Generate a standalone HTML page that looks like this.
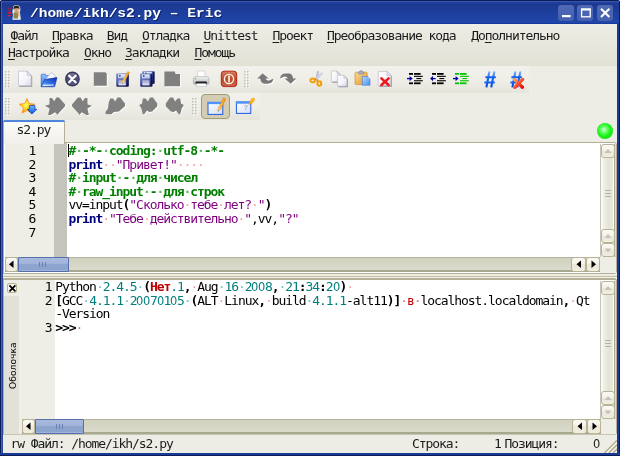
<!DOCTYPE html>
<html lang="ru">
<head>
<meta charset="utf-8">
<title>/home/ikh/s2.py – Eric</title>
<style>
html,body{margin:0;padding:0;background:#fff;overflow:hidden}
body{width:620px;height:456px;position:relative;font-family:"DejaVu Sans Mono","Liberation Mono",monospace;font-size:13px;letter-spacing:-1.066px;color:#000}
#win,#win div,#win svg{position:absolute;box-sizing:border-box}
#win span,#win u{position:static}
#win{will-change:transform;left:0;top:0;width:620px;height:456px;overflow:hidden;border-radius:2.5px 2.5px 0 0;
 background:linear-gradient(to right,#0c1c55 0,#0c1c55 1px,#4262b8 1px,#4262b8 2px,#2848a6 2px,#2848a6 3px,#1a3a98 3px,#1a3a98 619px,#0c1c55 619px)}
#botb{left:0;top:453px;width:620px;height:3px;background:linear-gradient(to bottom,#1a3a98 0,#1a3a98 2px,#0c1c55 2px)}
#title{left:0;top:0;width:620px;height:24px;
 background:linear-gradient(to bottom,#0c1c55 0px,#0c1c55 1px,#3555b3 1px,#3555b3 2px,#2444a2 2px,#1c3990 4px,#1d3e9c 12px,#2046aa 22.5px,#17389c 23px,#17389c 24px)}
#ttext{left:29.5px;top:4.3px;height:20px;line-height:20px;font-family:"Liberation Mono","DejaVu Sans Mono",monospace;font-weight:bold;font-size:12.4px;letter-spacing:0;color:#fff;white-space:pre;text-shadow:0.8px 1px 0 #0e2266;transform-origin:0 0;transform:scaleX(1.175)}
.wb{top:4.7px;width:16.4px;height:16.3px;border-radius:3px;background:linear-gradient(to bottom,#5069b5,#4760ae)}
#client{left:3px;top:24px;width:614px;height:429px;background:#eeede5}
#menubar{left:3px;top:24px;width:614px;height:42px;background:linear-gradient(to bottom,#eeede6,#e2e1d5)}
.t{white-space:pre;height:16px;line-height:16px;color:#1c1c1c}
.t u{text-decoration:underline;text-decoration-thickness:1px;text-underline-offset:2.2px;text-decoration-skip-ink:none}
.tb{background:linear-gradient(to bottom,#f2f1ec,#eeede6 55%,#e6e5dc)}
.ln{white-space:pre;height:14px;line-height:14px}
.cm{color:#007f00;font-weight:bold}
.kw{color:#00007f;font-weight:bold}
.st{color:#7f007f}
.ws{color:#f0a0a0}
.num{color:#007f7f}
.red{color:#c00000}
.z{font-family:"DejaVu Sans","Liberation Sans",sans-serif;letter-spacing:0;display:inline-block;width:6.76px;transform:scaleX(0.88);transform-origin:0 50%}
.wsr{color:#e87070}
.wsg{color:#60b860}
.wst{color:#70c0c0}
.frame{border:1px solid #b5b095;border-radius:2px}
.sbtn{border:1px solid #b9b294;border-radius:3px;background:linear-gradient(to bottom,#fbfaf6,#f3f0e6 50%,#ebe7d9 50%,#f0ede2)}
.vtrack{background:linear-gradient(to right,#c6c6b6 0,#c6c6b6 1.4px,#fbfbf7 1.4px,#fbfbf7 2.2px,#f1f1e9 3px,#e3e3d6 9px,#e9e9dd 13px,#fff 13px,#fff 14px,#a9a992 14px,#a9a992 15px,#dcdccf 15px,#dcdccf 16px)}
.htrack{background:linear-gradient(to bottom,#b6b6a0 0,#b6b6a0 1px,#d1d1bf 1px,#dbdbcb 13px,#a9a992 13px,#a9a992 14.5px)}
.hslider{border:1px solid #5670ab;border-radius:1px;background:linear-gradient(to bottom,#a9badd,#a0b2d9 50%,#8fa5cf 50%,#8ca3ce 88%,#a9badf 100%)}
</style>
</head>
<body>
<div id="win">
 <div id="title"></div>
 <div style="left:0;top:1px;width:1px;height:23px;background:#0c1c55"></div>
 <div style="left:1px;top:1px;width:1px;height:23px;background:#4262b8"></div>
 <div style="left:619px;top:1px;width:1px;height:23px;background:#0c1c55"></div>
 <div id="ttext">/home/ikh/s2.py – Eric</div>
 <div class="wb" style="left:557.7px"></div>
 <div class="wb" style="left:577px"></div>
 <div class="wb" style="left:596.6px"></div>
 <div id="botb"></div>
 <div id="client"></div>
 <div id="menubar"></div>
 <div class="t" style="left:10.5px;top:27.7px"><u>Ф</u>айл</div>
 <div class="t" style="left:52px;top:27.7px"><u>П</u>равка</div>
 <div class="t" style="left:106.7px;top:27.7px"><u>В</u>ид</div>
 <div class="t" style="left:142px;top:27.7px"><u>О</u>тладка</div>
 <div class="t" style="left:203.5px;top:27.7px"><u>U</u>nittest</div>
 <div class="t" style="left:272.5px;top:27.7px"><u>П</u>роект</div>
 <div class="t" style="left:327px;top:27.7px"><u>П</u>реобразование кода</div>
 <div class="t" style="left:471.3px;top:27.7px">До<u>п</u>олнительно</div>
 <div class="t" style="left:8px;top:44.9px"><u>Н</u>астройка</div>
 <div class="t" style="left:84px;top:44.9px"><u>О</u>кно</div>
 <div class="t" style="left:125px;top:44.9px"><u>З</u>акладки</div>
 <div class="t" style="left:194.5px;top:44.9px"><u>П</u>омощь</div>
 <div class="tb" style="left:3px;top:66px;width:526px;height:27px"></div>
 <div class="tb" style="left:3px;top:93px;width:257px;height:27px"></div>
 <svg style="left:0;top:0" width="0" height="0"><defs>
<linearGradient id="gPage" x1="0" y1="0" x2="1" y2="1"><stop offset="0" stop-color="#ffffff"/><stop offset="0.55" stop-color="#f5f5fa"/><stop offset="1" stop-color="#d8d8e6"/></linearGradient>
<linearGradient id="gFold" x1="0" y1="1" x2="0.9" y2="0"><stop offset="0" stop-color="#a8d4ff"/><stop offset="0.4" stop-color="#3c7cea"/><stop offset="1" stop-color="#0a30b0"/></linearGradient>
<linearGradient id="gFold2" x1="0" y1="0" x2="0" y2="1"><stop offset="0" stop-color="#8ec4ff"/><stop offset="1" stop-color="#3a7ae0"/></linearGradient>
<linearGradient id="gClose" x1="0" y1="0" x2="0" y2="1"><stop offset="0" stop-color="#77779c"/><stop offset="0.5" stop-color="#4a4a72"/><stop offset="1" stop-color="#5a5a82"/></linearGradient>
<linearGradient id="gFlop" x1="0" y1="0" x2="1" y2="1"><stop offset="0" stop-color="#8494cc"/><stop offset="0.45" stop-color="#4454a0"/><stop offset="1" stop-color="#141a5a"/></linearGradient>
<linearGradient id="gFlopL" x1="0" y1="0" x2="0" y2="1"><stop offset="0" stop-color="#e4ecfc"/><stop offset="1" stop-color="#aabce8"/></linearGradient>
<linearGradient id="gShut" x1="0" y1="0" x2="0" y2="1"><stop offset="0" stop-color="#9098c8"/><stop offset="1" stop-color="#e6e6f6"/></linearGradient>
<linearGradient id="gPen" x1="0" y1="0" x2="1" y2="0"><stop offset="0" stop-color="#ffd860"/><stop offset="1" stop-color="#f09010"/></linearGradient>
<linearGradient id="gPrn" x1="0" y1="0" x2="0" y2="1"><stop offset="0" stop-color="#f4f4f4"/><stop offset="1" stop-color="#b4b4b8"/></linearGradient>
<linearGradient id="gPow" x1="0" y1="0" x2="0" y2="1"><stop offset="0" stop-color="#d88060"/><stop offset="0.5" stop-color="#b84a28"/><stop offset="1" stop-color="#c86848"/></linearGradient>
<linearGradient id="gClip" x1="0" y1="0" x2="1" y2="1"><stop offset="0" stop-color="#f8d898"/><stop offset="1" stop-color="#e09a28"/></linearGradient>
<linearGradient id="gBlueP" x1="0" y1="0" x2="1" y2="1"><stop offset="0" stop-color="#b8d8ff"/><stop offset="1" stop-color="#4a90f0"/></linearGradient>
<linearGradient id="gHash" x1="0" y1="0" x2="0" y2="1"><stop offset="0" stop-color="#8ab8ff"/><stop offset="0.35" stop-color="#1868f4"/><stop offset="1" stop-color="#0a48d8"/></linearGradient>
<linearGradient id="gRedX" x1="0" y1="0" x2="1" y2="1"><stop offset="0" stop-color="#ffa060"/><stop offset="0.5" stop-color="#f85030"/><stop offset="1" stop-color="#e80808"/></linearGradient>
<radialGradient id="gStar" cx="0.45" cy="0.45" r="0.6"><stop offset="0" stop-color="#ffff60"/><stop offset="0.45" stop-color="#ffd020"/><stop offset="1" stop-color="#ff8000"/></radialGradient>
<linearGradient id="gArr" x1="0" y1="0" x2="0" y2="1"><stop offset="0" stop-color="#70b8ff"/><stop offset="1" stop-color="#0858e0"/></linearGradient>
<linearGradient id="gWin" x1="0" y1="0" x2="1" y2="1"><stop offset="0" stop-color="#ffffff"/><stop offset="1" stop-color="#d4dcf4"/></linearGradient>
</defs></svg>
 <svg style="left:5.3px;top:71px" width="7" height="19" viewBox="0 0 7 19"><rect x="1.00" y="1.00" width="1.5" height="1.5" fill="#fdfdfb"/><rect x="0.00" y="0.00" width="1.6" height="1.6" fill="#c3c2b2"/><rect x="4.00" y="1.00" width="1.5" height="1.5" fill="#fdfdfb"/><rect x="3.00" y="0.00" width="1.6" height="1.6" fill="#c3c2b2"/><rect x="1.00" y="3.95" width="1.5" height="1.5" fill="#fdfdfb"/><rect x="0.00" y="2.95" width="1.6" height="1.6" fill="#c3c2b2"/><rect x="4.00" y="3.95" width="1.5" height="1.5" fill="#fdfdfb"/><rect x="3.00" y="2.95" width="1.6" height="1.6" fill="#c3c2b2"/><rect x="1.00" y="6.90" width="1.5" height="1.5" fill="#fdfdfb"/><rect x="0.00" y="5.90" width="1.6" height="1.6" fill="#c3c2b2"/><rect x="4.00" y="6.90" width="1.5" height="1.5" fill="#fdfdfb"/><rect x="3.00" y="5.90" width="1.6" height="1.6" fill="#c3c2b2"/><rect x="1.00" y="9.85" width="1.5" height="1.5" fill="#fdfdfb"/><rect x="0.00" y="8.85" width="1.6" height="1.6" fill="#c3c2b2"/><rect x="4.00" y="9.85" width="1.5" height="1.5" fill="#fdfdfb"/><rect x="3.00" y="8.85" width="1.6" height="1.6" fill="#c3c2b2"/><rect x="1.00" y="12.80" width="1.5" height="1.5" fill="#fdfdfb"/><rect x="0.00" y="11.80" width="1.6" height="1.6" fill="#c3c2b2"/><rect x="4.00" y="12.80" width="1.5" height="1.5" fill="#fdfdfb"/><rect x="3.00" y="11.80" width="1.6" height="1.6" fill="#c3c2b2"/><rect x="1.00" y="15.75" width="1.5" height="1.5" fill="#fdfdfb"/><rect x="0.00" y="14.75" width="1.6" height="1.6" fill="#c3c2b2"/><rect x="4.00" y="15.75" width="1.5" height="1.5" fill="#fdfdfb"/><rect x="3.00" y="14.75" width="1.6" height="1.6" fill="#c3c2b2"/></svg>
 <svg style="left:244.3px;top:71px" width="7" height="19" viewBox="0 0 7 19"><rect x="1.00" y="1.00" width="1.5" height="1.5" fill="#fdfdfb"/><rect x="0.00" y="0.00" width="1.6" height="1.6" fill="#c3c2b2"/><rect x="4.00" y="1.00" width="1.5" height="1.5" fill="#fdfdfb"/><rect x="3.00" y="0.00" width="1.6" height="1.6" fill="#c3c2b2"/><rect x="1.00" y="3.95" width="1.5" height="1.5" fill="#fdfdfb"/><rect x="0.00" y="2.95" width="1.6" height="1.6" fill="#c3c2b2"/><rect x="4.00" y="3.95" width="1.5" height="1.5" fill="#fdfdfb"/><rect x="3.00" y="2.95" width="1.6" height="1.6" fill="#c3c2b2"/><rect x="1.00" y="6.90" width="1.5" height="1.5" fill="#fdfdfb"/><rect x="0.00" y="5.90" width="1.6" height="1.6" fill="#c3c2b2"/><rect x="4.00" y="6.90" width="1.5" height="1.5" fill="#fdfdfb"/><rect x="3.00" y="5.90" width="1.6" height="1.6" fill="#c3c2b2"/><rect x="1.00" y="9.85" width="1.5" height="1.5" fill="#fdfdfb"/><rect x="0.00" y="8.85" width="1.6" height="1.6" fill="#c3c2b2"/><rect x="4.00" y="9.85" width="1.5" height="1.5" fill="#fdfdfb"/><rect x="3.00" y="8.85" width="1.6" height="1.6" fill="#c3c2b2"/><rect x="1.00" y="12.80" width="1.5" height="1.5" fill="#fdfdfb"/><rect x="0.00" y="11.80" width="1.6" height="1.6" fill="#c3c2b2"/><rect x="4.00" y="12.80" width="1.5" height="1.5" fill="#fdfdfb"/><rect x="3.00" y="11.80" width="1.6" height="1.6" fill="#c3c2b2"/><rect x="1.00" y="15.75" width="1.5" height="1.5" fill="#fdfdfb"/><rect x="0.00" y="14.75" width="1.6" height="1.6" fill="#c3c2b2"/><rect x="4.00" y="15.75" width="1.5" height="1.5" fill="#fdfdfb"/><rect x="3.00" y="14.75" width="1.6" height="1.6" fill="#c3c2b2"/></svg>
 <svg style="left:5.3px;top:98px" width="7" height="19" viewBox="0 0 7 19"><rect x="1.00" y="1.00" width="1.5" height="1.5" fill="#fdfdfb"/><rect x="0.00" y="0.00" width="1.6" height="1.6" fill="#c3c2b2"/><rect x="4.00" y="1.00" width="1.5" height="1.5" fill="#fdfdfb"/><rect x="3.00" y="0.00" width="1.6" height="1.6" fill="#c3c2b2"/><rect x="1.00" y="3.95" width="1.5" height="1.5" fill="#fdfdfb"/><rect x="0.00" y="2.95" width="1.6" height="1.6" fill="#c3c2b2"/><rect x="4.00" y="3.95" width="1.5" height="1.5" fill="#fdfdfb"/><rect x="3.00" y="2.95" width="1.6" height="1.6" fill="#c3c2b2"/><rect x="1.00" y="6.90" width="1.5" height="1.5" fill="#fdfdfb"/><rect x="0.00" y="5.90" width="1.6" height="1.6" fill="#c3c2b2"/><rect x="4.00" y="6.90" width="1.5" height="1.5" fill="#fdfdfb"/><rect x="3.00" y="5.90" width="1.6" height="1.6" fill="#c3c2b2"/><rect x="1.00" y="9.85" width="1.5" height="1.5" fill="#fdfdfb"/><rect x="0.00" y="8.85" width="1.6" height="1.6" fill="#c3c2b2"/><rect x="4.00" y="9.85" width="1.5" height="1.5" fill="#fdfdfb"/><rect x="3.00" y="8.85" width="1.6" height="1.6" fill="#c3c2b2"/><rect x="1.00" y="12.80" width="1.5" height="1.5" fill="#fdfdfb"/><rect x="0.00" y="11.80" width="1.6" height="1.6" fill="#c3c2b2"/><rect x="4.00" y="12.80" width="1.5" height="1.5" fill="#fdfdfb"/><rect x="3.00" y="11.80" width="1.6" height="1.6" fill="#c3c2b2"/><rect x="1.00" y="15.75" width="1.5" height="1.5" fill="#fdfdfb"/><rect x="0.00" y="14.75" width="1.6" height="1.6" fill="#c3c2b2"/><rect x="4.00" y="15.75" width="1.5" height="1.5" fill="#fdfdfb"/><rect x="3.00" y="14.75" width="1.6" height="1.6" fill="#c3c2b2"/></svg>
 <svg style="left:192.3px;top:98px" width="7" height="19" viewBox="0 0 7 19"><rect x="1.00" y="1.00" width="1.5" height="1.5" fill="#fdfdfb"/><rect x="0.00" y="0.00" width="1.6" height="1.6" fill="#c3c2b2"/><rect x="4.00" y="1.00" width="1.5" height="1.5" fill="#fdfdfb"/><rect x="3.00" y="0.00" width="1.6" height="1.6" fill="#c3c2b2"/><rect x="1.00" y="3.95" width="1.5" height="1.5" fill="#fdfdfb"/><rect x="0.00" y="2.95" width="1.6" height="1.6" fill="#c3c2b2"/><rect x="4.00" y="3.95" width="1.5" height="1.5" fill="#fdfdfb"/><rect x="3.00" y="2.95" width="1.6" height="1.6" fill="#c3c2b2"/><rect x="1.00" y="6.90" width="1.5" height="1.5" fill="#fdfdfb"/><rect x="0.00" y="5.90" width="1.6" height="1.6" fill="#c3c2b2"/><rect x="4.00" y="6.90" width="1.5" height="1.5" fill="#fdfdfb"/><rect x="3.00" y="5.90" width="1.6" height="1.6" fill="#c3c2b2"/><rect x="1.00" y="9.85" width="1.5" height="1.5" fill="#fdfdfb"/><rect x="0.00" y="8.85" width="1.6" height="1.6" fill="#c3c2b2"/><rect x="4.00" y="9.85" width="1.5" height="1.5" fill="#fdfdfb"/><rect x="3.00" y="8.85" width="1.6" height="1.6" fill="#c3c2b2"/><rect x="1.00" y="12.80" width="1.5" height="1.5" fill="#fdfdfb"/><rect x="0.00" y="11.80" width="1.6" height="1.6" fill="#c3c2b2"/><rect x="4.00" y="12.80" width="1.5" height="1.5" fill="#fdfdfb"/><rect x="3.00" y="11.80" width="1.6" height="1.6" fill="#c3c2b2"/><rect x="1.00" y="15.75" width="1.5" height="1.5" fill="#fdfdfb"/><rect x="0.00" y="14.75" width="1.6" height="1.6" fill="#c3c2b2"/><rect x="4.00" y="15.75" width="1.5" height="1.5" fill="#fdfdfb"/><rect x="3.00" y="14.75" width="1.6" height="1.6" fill="#c3c2b2"/></svg>
 <svg style="left:17px;top:70px" width="18" height="18" viewBox="0 0 18 18"><path d="M2.4 2.2 h8.600000000000001 l4.2 4.2 v10.399999999999999 h-12.8 z" fill="#707084" opacity="0.75"/><path d="M1.5 1.2 h8.600000000000001 l4.2 4.2 v10.399999999999999 h-12.8 z" fill="url(#gPage)" stroke="#b4b4c8" stroke-width="0.6"/><path d="M10.100000000000001 1.2 v4.2 h4.2 z" fill="#e8e8f2" stroke="#a8a8bc" stroke-width="0.5"/></svg>
 <svg style="left:40px;top:70px" width="19" height="18" viewBox="0 0 19 18"><path d="M1.2 16.6 V5 Q1.2 4.2 2 4.2 H5.2 L6.4 5.6 H12 V16.6 z" fill="url(#gFold2)" stroke="#2456c8" stroke-width="0.6"/><path d="M5.2 9.5 L11.4 2.6 L15.6 6.2 L9.6 13 z" fill="#fbfbff" stroke="#9aa4d0" stroke-width="0.6"/><path d="M1.2 16.7 L4.6 9.4 L17 7.6 L14.6 16.7 z" fill="url(#gFold)" stroke="#0c2ea8" stroke-width="0.6"/><path d="M3 15.4 L13.6 15 " stroke="#e8f0ff" stroke-width="1.1"/></svg>
 <svg style="left:63px;top:70px" width="19" height="18" viewBox="0 0 19 18"><circle cx="9.4" cy="9" r="7.4" fill="#36365e"/><circle cx="9.4" cy="9" r="6.1" fill="url(#gClose)"/><path d="M6.2 5.8 L12.6 12.2 M12.6 5.8 L6.2 12.2" stroke="#ffffff" stroke-width="2.3" stroke-linecap="round"/></svg>
 <svg style="left:92px;top:70px" width="18" height="18" viewBox="0 0 18 18"><path d="M2.8 3.2 H14.3 L15.8 4.7 V16.7 H2.8 z" fill="#ffffff"/><path d="M1.8 2.2 H13.3 L14.8 3.7 V15.7 H1.8 z" fill="#808080"/></svg>
 <svg style="left:115px;top:70px" width="18" height="18" viewBox="0 0 18 18"><rect x="1.2" y="3.4" width="12.4" height="13" rx="0.8" fill="url(#gFlop)"/><path d="M13.0 4.0 V15.799999999999999 H1.7999999999999998" fill="none" stroke="#10144c" stroke-width="1.3"/><rect x="3.0" y="4.1" width="8.0" height="4.42" fill="url(#gFlopL)"/><rect x="4.2" y="4.8" width="1.3" height="1.7" fill="#283070"/><rect x="3.4000000000000004" y="9.51" width="7.4" height="5.89" fill="url(#gShut)"/><path d="M12.8 1.4 L14.6 2.5 L8.9 12.6 L7 13.7 L7.2 11.5 z" fill="url(#gPen)" stroke="#d88810" stroke-width="0.35"/><path d="M7.2 11.5 L8.9 12.6 L7 13.7 z" fill="#f4dcb0"/><path d="M7.05 13.65 L7.6 12.5 L8.1 13.1 z" fill="#403020"/></svg>
 <svg style="left:139px;top:70px" width="18" height="18" viewBox="0 0 18 18"><rect x="3.2" y="1.2" width="12.2" height="12.4" rx="0.8" fill="url(#gFlop)"/><path d="M14.799999999999999 1.7999999999999998 V13.0 H3.8000000000000003" fill="none" stroke="#10144c" stroke-width="1.3"/><rect x="5.0" y="1.9" width="7.799999999999999" height="4.22" fill="url(#gFlopL)"/><rect x="6.2" y="2.5999999999999996" width="1.3" height="1.7" fill="#283070"/><rect x="5.4" y="7.03" width="7.199999999999999" height="5.57" fill="url(#gShut)"/><rect x="1.1" y="3.6" width="12.2" height="12.8" rx="0.8" fill="url(#gFlop)"/><path d="M12.7 4.2 V15.800000000000002 H1.7000000000000002" fill="none" stroke="#10144c" stroke-width="1.3"/><rect x="2.9000000000000004" y="4.3" width="7.799999999999999" height="4.35" fill="url(#gFlopL)"/><rect x="4.1" y="5.0" width="1.3" height="1.7" fill="#283070"/><rect x="3.3000000000000003" y="9.62" width="7.199999999999999" height="5.78" fill="url(#gShut)"/></svg>
 <svg style="left:163px;top:70px" width="19" height="18" viewBox="0 0 19 18"><path d="M2.4 2.4 H12.8 V5 H17.8 V17.2 H2.4 z" fill="#ffffff"/><path d="M1.4 1.4 H11.8 L12.6 4 H17 V16.3 H1.4 z" fill="#808080"/></svg>
 <svg style="left:192px;top:70px" width="19" height="18" viewBox="0 0 19 18"><path d="M5.6 1 H13 V8 H5.6 z" fill="#ffffff" stroke="#c4c4cc" stroke-width="0.6"/><path d="M3.2 6.6 H15 Q17 7 17 9.4 V13 Q17 14.2 15.6 14.2 H2.8 Q1.3 14.2 1.3 13 V9.4 Q1.3 7 3.2 6.6 z" fill="url(#gPrn)" stroke="#9c9ca4" stroke-width="0.5"/><rect x="3.6" y="11.6" width="11.2" height="2.4" rx="0.6" fill="#181818"/><path d="M4.6 13.4 H13.8 L14.4 16.4 H4 z" fill="#fdfdfd" stroke="#b0b0b8" stroke-width="0.5"/><circle cx="3.6" cy="8.8" r="0.8" fill="#30d830"/></svg>
 <svg style="left:220px;top:70px" width="19" height="18" viewBox="0 0 19 18"><rect x="1.3" y="1.2" width="15.4" height="15.4" rx="2.8" fill="url(#gPow)" stroke="#b8281a" stroke-width="1"/><circle cx="9" cy="9" r="4.6" fill="none" stroke="#fff4ec" stroke-width="1.4"/><rect x="8.2" y="5.6" width="1.6" height="6.8" fill="#fff4ec"/></svg>
 <svg style="left:256.6px;top:73.2px" width="18" height="13" viewBox="0 0 18 13"><path d="M5.6 0.4 L11.8 5.6 H8.6 Q9.6 8 12.2 7.6 L16.4 5.8 Q15.6 10.8 10.6 10.7 H7 Q3.8 10 3.2 5.6 H0.2 z" fill="#ffffff" transform="translate(1,1)"/><path d="M5.6 0.4 L11.8 5.6 H8.6 Q9.6 8 12.2 7.6 L16.4 5.8 Q15.6 10.8 10.6 10.7 H7 Q3.8 10 3.2 5.6 H0.2 z" fill="#787878"/></svg>
 <svg style="left:279.8px;top:73.2px" width="18" height="13" viewBox="0 0 18 13"><path d="M10.8 10.8 L4.6 5.6 H7.8 Q6.8 3.2 4.2 3.6 L0 5.4 Q0.8 0.4 5.8 0.5 H9.4 Q12.6 1.2 13.2 5.6 H16.2 z" fill="#ffffff" transform="translate(1,1)"/><path d="M10.8 10.8 L4.6 5.6 H7.8 Q6.8 3.2 4.2 3.6 L0 5.4 Q0.8 0.4 5.8 0.5 H9.4 Q12.6 1.2 13.2 5.6 H16.2 z" fill="#787878"/></svg>
 <svg style="left:308px;top:70px" width="17" height="18" viewBox="0 0 17 18"><path d="M9.4 1.2 L10.8 1.6 L9.6 10 L7.6 9.6 z" fill="#c8c8e4" stroke="#9c9cc0" stroke-width="0.4"/><path d="M13.6 2.6 L14.6 3.6 L8.4 10.6 L7 9.4 z" fill="#dcdcf0" stroke="#a4a4c8" stroke-width="0.4"/><ellipse cx="4.6" cy="10.4" rx="2.2" ry="1.9" fill="none" stroke="#f0a010" stroke-width="2.1"/><ellipse cx="11.3" cy="13.5" rx="1.9" ry="2.2" fill="none" stroke="#f0a010" stroke-width="2.1"/><path d="M6.4 9.4 L8.4 8.8 M9.6 11.4 L9 9.6" stroke="#e89008" stroke-width="1.6"/></svg>
 <svg style="left:330px;top:70px" width="19" height="18" viewBox="0 0 19 18"><path d="M2.3 2 h5.6 l3 3 v7.800000000000001 h-8.6 z" fill="#707084" opacity="0.75"/><path d="M1.4 1 h5.6 l3 3 v7.800000000000001 h-8.6 z" fill="url(#gPage)" stroke="#b4b4c8" stroke-width="0.6"/><path d="M7.0 1 v3 h3 z" fill="#e8e8f2" stroke="#a8a8bc" stroke-width="0.5"/><path d="M8.5 6.3 h6.300000000000001 l3 3 v7.9 h-9.3 z" fill="#707084" opacity="0.75"/><path d="M7.6 5.3 h6.300000000000001 l3 3 v7.9 h-9.3 z" fill="url(#gPage)" stroke="#b4b4c8" stroke-width="0.6"/><path d="M13.899999999999999 5.3 v3 h3 z" fill="#e8e8f2" stroke="#a8a8bc" stroke-width="0.5"/></svg>
 <svg style="left:354px;top:70px" width="18" height="18" viewBox="0 0 18 18"><rect x="1" y="2.2" width="12.2" height="12.4" rx="1" fill="url(#gClip)" stroke="#c88420" stroke-width="0.6"/><path d="M4.6 3.8 V2.2 Q4.6 1.6 5.4 1.6 H5.8 Q6 0.6 7.1 0.6 Q8.2 0.6 8.4 1.6 H8.8 Q9.6 1.6 9.6 2.2 V3.8 z" fill="#a8b0cc" stroke="#6c7498" stroke-width="0.5"/><path d="M8.4 6.5 H13.2 L16 9.2 V15.2 H8.4 z" fill="url(#gBlueP)" stroke="#3c78d8" stroke-width="0.6"/><path d="M13.2 6.5 V9.2 H16 z" fill="#d8e8ff" stroke="#3c78d8" stroke-width="0.4"/></svg>
 <svg style="left:377px;top:70px" width="18" height="18" viewBox="0 0 18 18"><path d="M2.2 2.4 h8.6 l4 4 v10.4 h-12.6 z" fill="#707084" opacity="0.75"/><path d="M1.3 1.4 h8.6 l4 4 v10.4 h-12.6 z" fill="url(#gPage)" stroke="#b4b4c8" stroke-width="0.6"/><path d="M9.9 1.4 v4 h4 z" fill="#e8e8f2" stroke="#a8a8bc" stroke-width="0.5"/><path d="M4.4 8.4 L11.6 15 M11.6 8.4 L4.4 15" stroke="#f01818" stroke-width="2.6" stroke-linecap="round"/></svg>
 <svg style="left:407px;top:73px" width="16" height="12" viewBox="0 0 16 12"><rect x="2" y="0" width="4" height="1.8" fill="#000000"/><rect x="7" y="0" width="6.6" height="1.8" fill="#000000"/><rect x="2" y="9.4" width="4" height="1.8" fill="#000000"/><rect x="7" y="9.4" width="6.6" height="1.8" fill="#000000"/><rect x="7" y="2.8" width="8.8" height="1.1" fill="#000000"/><rect x="9.4" y="5" width="4.8" height="1.1" fill="#000000"/><rect x="7" y="7.2" width="8.8" height="1.1" fill="#000000"/><path d="M0 5.6 H3.4" stroke="#0000a0" stroke-width="1.3"/><path d="M2.6 3 L5.6 5.6 L2.6 8.2 z" fill="#0000a0"/></svg>
 <svg style="left:430px;top:73px" width="16" height="12" viewBox="0 0 16 12"><rect x="2" y="0" width="4" height="1.8" fill="#000000"/><rect x="7" y="0" width="6.6" height="1.8" fill="#000000"/><rect x="2" y="9.4" width="4" height="1.8" fill="#000000"/><rect x="7" y="9.4" width="6.6" height="1.8" fill="#000000"/><rect x="7" y="2.8" width="8.8" height="1.1" fill="#000000"/><rect x="9.4" y="5" width="4.8" height="1.1" fill="#000000"/><rect x="7" y="7.2" width="8.8" height="1.1" fill="#000000"/><path d="M2.2 5.6 H5.6" stroke="#0000a0" stroke-width="1.3"/><path d="M3 3 L0 5.6 L3 8.2 z" fill="#0000a0"/></svg>
 <svg style="left:453.2px;top:73px" width="16" height="12" viewBox="0 0 16 12"><rect x="2" y="0" width="4" height="1.8" fill="#00c400"/><rect x="7" y="0" width="6.6" height="1.8" fill="#00c400"/><rect x="2" y="9.4" width="4" height="1.8" fill="#00c400"/><rect x="7" y="9.4" width="6.6" height="1.8" fill="#00c400"/><rect x="7" y="2.8" width="8.8" height="1.1" fill="#00c400"/><rect x="9.4" y="5" width="4.8" height="1.1" fill="#00c400"/><rect x="7" y="7.2" width="8.8" height="1.1" fill="#00c400"/><path d="M0 5.6 H3.4" stroke="#0000a0" stroke-width="1.3"/><path d="M2.6 3 L5.6 5.6 L2.6 8.2 z" fill="#0000a0"/></svg>
 <svg style="left:484px;top:70.6px" width="13" height="17" viewBox="0 0 13 17"><g><path d="M5.4 0.4 L2.4 16.4 M10.4 0.4 L7.2 16.4" stroke="url(#gHash)" stroke-width="2.1" fill="none"/><path d="M1.4 6.2 H11.8 M0.4 11.4 H10.8" stroke="#1462f0" stroke-width="2"/></g></svg>
 <svg style="left:510px;top:70.6px" width="15" height="18" viewBox="0 0 15 18"><g><path d="M5.4 0.4 L2.4 16.4 M10.4 0.4 L7.2 16.4" stroke="url(#gHash)" stroke-width="2.1" fill="none"/><path d="M1.4 6.2 H11.8 M0.4 11.4 H10.8" stroke="#1462f0" stroke-width="2"/></g><path d="M4.6 8.6 L12.4 16.2 M12.6 8.4 L4.8 16.4" stroke="url(#gRedX)" stroke-width="3.3" stroke-linecap="round"/></svg>
 <svg style="left:18px;top:97px" width="20" height="18" viewBox="0 0 20 18"><polygon points="8.90,1.60 11.13,6.53 16.51,7.13 12.51,10.77 13.60,16.07 8.90,13.40 4.20,16.07 5.29,10.77 1.29,7.13 6.67,6.53" fill="url(#gStar)" stroke="#f08000" stroke-width="0.6"/><path d="M11.4 8.4 H16.9 V12.3 H18.9 L13.9 17 L9.4 12.3 H11.4 z" fill="url(#gArr)" stroke="#0838b0" stroke-width="0.7"/></svg>
 <svg style="left:45px;top:97px" width="22" height="20" viewBox="0 0 22 20"><polygon points="0.0,8.8 4.4,7.5 4.6,0.9 7.0,0.9 9.2,4.3 11.4,0.5 14.0,0.5 20.1,7.5 20.1,9.2 13.5,16.6 12.7,17.9 10.1,15.2 5.7,17.9 3.1,17.9 4.6,11.4" fill="#ffffff" transform="translate(0.8,0.8)"/><polygon points="0.0,8.8 4.4,7.5 4.6,0.9 7.0,0.9 9.2,4.3 11.4,0.5 14.0,0.5 20.1,7.5 20.1,9.2 13.5,16.6 12.7,17.9 10.1,15.2 5.7,17.9 3.1,17.9 4.6,11.4" fill="#808080"/></svg>
 <svg style="left:72px;top:97px" width="22" height="20" viewBox="0 0 22 20"><polygon points="20.0,8.8 15.6,7.5 15.4,0.9 13.0,0.9 10.8,4.3 8.6,0.5 6.0,0.5 -0.1,7.5 -0.1,9.2 6.5,16.6 7.3,17.9 9.9,15.2 14.3,17.9 16.9,17.9 15.4,11.4" fill="#ffffff" transform="translate(0.8,0.8)"/><polygon points="20.0,8.8 15.6,7.5 15.4,0.9 13.0,0.9 10.8,4.3 8.6,0.5 6.0,0.5 -0.1,7.5 -0.1,9.2 6.5,16.6 7.3,17.9 9.9,15.2 14.3,17.9 16.9,17.9 15.4,11.4" fill="#808080"/></svg>
 <svg style="left:105px;top:97px" width="22" height="20" viewBox="0 0 22 20"><polygon points="5.2,1.4 8.0,1.4 10.2,4.6 12.4,0.6 15.3,0.6 20.0,6.4 20.0,9.3 13.9,14.4 8.8,15.1 6.6,17.3 0.8,17.3 0.5,15.1 3.0,11.5 3.7,5.7" fill="#ffffff" transform="translate(0.8,0.8)"/><polygon points="5.2,1.4 8.0,1.4 10.2,4.6 12.4,0.6 15.3,0.6 20.0,6.4 20.0,9.3 13.9,14.4 8.8,15.1 6.6,17.3 0.8,17.3 0.5,15.1 3.0,11.5 3.7,5.7" fill="#808080"/></svg>
 <svg style="left:139px;top:97px" width="20" height="20" viewBox="0 0 20 20"><polygon points="0.2,7.9 3.1,6.4 3.8,1.4 6.7,1.4 8.9,4.6 11.1,0.6 14.0,0.6 18.3,6.4 18.3,9.3 13.2,14.4 10.3,15.1 8.0,13.6 5.3,17.3 3.8,17.3 2.4,11.5" fill="#ffffff" transform="translate(0.8,0.8)"/><polygon points="0.2,7.9 3.1,6.4 3.8,1.4 6.7,1.4 8.9,4.6 11.1,0.6 14.0,0.6 18.3,6.4 18.3,9.3 13.2,14.4 10.3,15.1 8.0,13.6 5.3,17.3 3.8,17.3 2.4,11.5" fill="#808080"/></svg>
 <svg style="left:165px;top:97px" width="21" height="20" viewBox="0 0 21 20"><polygon points="18.9,7.9 16.0,6.4 15.3,1.4 12.4,1.4 10.2,4.6 8.0,0.6 5.1,0.6 0.8,6.4 0.8,9.3 5.9,14.4 8.8,15.1 11.1,13.6 13.8,17.3 15.3,17.3 16.7,11.5" fill="#ffffff" transform="translate(0.8,0.8)"/><polygon points="18.9,7.9 16.0,6.4 15.3,1.4 12.4,1.4 10.2,4.6 8.0,0.6 5.1,0.6 0.8,6.4 0.8,9.3 5.9,14.4 8.8,15.1 11.1,13.6 13.8,17.3 15.3,17.3 16.7,11.5" fill="#808080"/></svg>
 <div style="left:201px;top:94px;width:29px;height:25px;border:1px solid #a39a7c;border-radius:4px;background:#d5cdb3"></div>
 <svg style="left:206px;top:96px" width="22" height="20" viewBox="0 0 22 20"><rect x="2" y="6.4" width="14.8" height="12" fill="url(#gWin)" stroke="#1c5ce0" stroke-width="1"/><rect x="1.5" y="5.9" width="15.8" height="2.2" fill="#4c94ff"/><path d="M17.6 1.8 L19.8 3 L14 14.2 L11.8 15.4 L12 12.8 z" fill="url(#gPen)" stroke="#c87808" stroke-width="0.4"/><path d="M12 12.8 L14 14.2 L11.8 15.4 z" fill="#f4dcb0"/><path d="M11.85 15.35 L12.5 14 L13 14.8 z" fill="#403020"/></svg>
 <svg style="left:234px;top:96px" width="23" height="20" viewBox="0 0 23 20"><rect x="2.4" y="6" width="14.4" height="11.4" fill="url(#gWin)" stroke="#1c5ce0" stroke-width="1"/><rect x="1.9" y="5.5" width="15.4" height="2.2" fill="#4c94ff"/><text x="9.6" y="14.2" font-family="Liberation Sans,sans-serif" font-weight="bold" font-size="7.6" fill="#b0b0bc" letter-spacing="0">?</text><path d="M14.6 8 L17 4 L20.4 2.2 L19.6 5.6 L16 8.6 z" fill="#ffb010" stroke="#f08800" stroke-width="0.5"/><polygon points="19.49,1.36 19.76,3.02 21.20,3.89 19.70,4.66 19.32,6.30 18.12,5.12 16.44,5.25 17.20,3.75 16.55,2.20 18.21,2.45" fill="#ffb818"/></svg>
 <svg style="left:5px;top:4px" width="18" height="18" viewBox="0 0 18 18"><path d="M8 4 Q8 1 11.4 1 Q15 1 15.4 4.6 L15 8.6 L15.8 15.8 H7.4 L8 11 L7.4 8 z" fill="#f4f2f0"/><path d="M8.4 5.6 Q8 1.6 11.4 1.6 Q14.8 1.6 14.6 5.4 L13.2 4.6 L10 4.8 z" fill="#2a2016"/><path d="M9.4 4.6 H13.6 V8.8 H9.4 z" fill="#d2a07a"/><path d="M12.6 7 H14.6 V12.4 H12.6 z" fill="#e0b48c"/><path d="M8.6 8.6 H12.8 L13.2 14.6 H8.4 z" fill="#8e8646"/><path d="M2.6 4.2 h1.4 M4.8 4.2 h1.4 M3.4 6 h2.2 M3 8.4 h3 M3 9.2 h3 M2.6 11.4 h3.6 M3 12.2 h2" stroke="#e81828" stroke-width="0.9"/></svg>
 <svg style="left:557px;top:4px" width="60" height="18" viewBox="0 0 60 18"><rect x="5" y="11" width="8.6" height="2.2" fill="#fff"/><rect x="24.6" y="5.2" width="8.6" height="7.6" fill="none" stroke="#fff" stroke-width="1.3"/><rect x="24" y="4.5" width="9.8" height="2" fill="#fff"/><path d="M44 4.8 L52.4 13 M52.4 4.8 L44 13" stroke="#fff" stroke-width="2.1"/></svg>
 <div style="left:596.5px;top:123px;width:16px;height:16px;border-radius:50%;background:radial-gradient(circle at 44% 42%,#dcffdc 0,#78ff78 20%,#1cf61c 48%,#12e012 78%,#1eb41e 100%)"></div>
 <div class="frame" style="left:3px;top:142px;width:614px;height:132px;background:#fff;border-radius:0 3px 3px 0"></div>
 <div style="left:4px;top:143px;width:50px;height:114px;background:#eeeee6;border-left:1px solid #fff"></div>
 <div style="left:54px;top:143px;width:13px;height:114px;background:#c4c4bc"></div>
 <div id="tab" style="left:3px;top:120px;width:62px;height:23.5px;background:linear-gradient(to bottom,#fbfbf8,#f1f0ea);border:1px solid #b5b095;border-bottom:none;border-radius:3px 3px 0 0"></div>
 <div style="left:3px;top:120px;width:62px;height:2px;background:#4f86dc;border-radius:3px 3px 0 0"></div>
 <div class="t" style="left:16.5px;top:122.1px">s2.py</div>
 <div style="left:67.6px;top:143.6px;width:1.5px;height:13.4px;background:#000"></div>
 <div class="ln" style="left:28.6px;top:144.20px">1</div>
 <div class="ln" style="left:68.5px;top:144.20px"><span class="cm">#<span class="wsg">·</span>-*-<span class="wsg">·</span>coding:<span class="wsg">·</span>utf-8<span class="wsg">·</span>-*-</span></div>
 <div class="ln" style="left:28.6px;top:157.75px">2</div>
 <div class="ln" style="left:68.5px;top:157.75px"><span class="kw">print</span><span class="ws">··</span><span class="st">"Привет!"</span><span class="ws">····</span></div>
 <div class="ln" style="left:28.6px;top:171.30px">3</div>
 <div class="ln" style="left:68.5px;top:171.30px"><span class="cm">#<span class="wsg">·</span>input<span class="wsg">·</span>-<span class="wsg">·</span>для<span class="wsg">·</span>чисел</span></div>
 <div class="ln" style="left:28.6px;top:184.85px">4</div>
 <div class="ln" style="left:68.5px;top:184.85px"><span class="cm">#<span class="wsg">·</span>raw_input<span class="wsg">·</span>-<span class="wsg">·</span>для<span class="wsg">·</span>строк</span></div>
 <div class="ln" style="left:28.6px;top:198.40px">5</div>
 <div class="ln" style="left:68.5px;top:198.40px">vv=input<b>(</b><span class="st">"Сколько<span class="ws">·</span>тебе<span class="ws">·</span>лет?<span class="ws">·</span>"</span><b>)</b></div>
 <div class="ln" style="left:28.6px;top:211.95px">6</div>
 <div class="ln" style="left:68.5px;top:211.95px"><span class="kw">print</span><span class="ws">·</span><span class="st">"Тебе<span class="ws">·</span>действительно<span class="ws">·</span>"</span>,vv,<span class="st">"?"</span></div>
 <div class="ln" style="left:28.6px;top:225.50px">7</div>
 <div class="vtrack" style="left:600px;top:144px;width:16px;height:113px"></div>
 <div class="sbtn" style="left:601px;top:144px;width:14px;height:14px"></div>
 <div class="sbtn" style="left:601px;top:229px;width:14px;height:14px"></div>
 <div class="sbtn" style="left:601px;top:243px;width:14px;height:14px"></div>
 <svg style="left:601px;top:144px" width="14" height="14"><polygon points="3.5,9 10.5,9 7,5" fill="#c3c3bd"/></svg>
 <svg style="left:601px;top:229px" width="14" height="14"><polygon points="3.5,9 10.5,9 7,5" fill="#c3c3bd"/></svg>
 <svg style="left:601px;top:243px" width="14" height="14"><polygon points="3.5,5.5 10.5,5.5 7,9.5" fill="#c3c3bd"/></svg>
 <div style="left:605px;top:190px;width:6px;height:1px;background:#b4b4a4"></div>
 <div style="left:605px;top:193px;width:6px;height:1px;background:#b4b4a4"></div>
 <div style="left:605px;top:196px;width:6px;height:1px;background:#b4b4a4"></div>
 <div style="left:600px;top:257px;width:16px;height:16px;background:#efeee6"></div>
 <div class="htrack" style="left:4.5px;top:257px;width:595.5px;height:14.5px"></div>
 <div class="sbtn" style="left:4.5px;top:257px;width:13.5px;height:14.5px"></div>
 <div class="sbtn" style="left:571.3px;top:257px;width:15.2px;height:14.5px"></div>
 <div class="sbtn" style="left:586.0px;top:257px;width:14px;height:14.5px"></div>
 <svg style="left:4.5px;top:257px" width="14" height="15"><polygon points="4,7.2 8.5,3.5 8.5,11" fill="#000"/></svg>
 <svg style="left:572.0px;top:257px" width="14" height="15"><polygon points="4.5,7.2 9,3.5 9,11" fill="#000"/></svg>
 <svg style="left:586.0px;top:257px" width="14" height="15"><polygon points="10,7.2 5.5,3.5 5.5,11" fill="#000"/></svg>
 <div class="hslider" style="left:17.5px;top:257px;width:51px;height:14.5px"></div>
 <div style="left:39.0px;top:262px;width:1.2px;height:5px;background:#6880b6"></div>
 <div style="left:42.0px;top:262px;width:1.2px;height:5px;background:#6880b6"></div>
 <div style="left:45.0px;top:262px;width:1.2px;height:5px;background:#6880b6"></div>
 <div style="left:3px;top:274px;width:614px;height:5px;background:linear-gradient(to bottom,#edede1 0,#edede1 2px,#c2bea4 2px,#c2bea4 3px,#f4f4ec 3px)"></div>
 <div class="frame" style="left:3px;top:278px;width:614px;height:156.5px;background:#fff;border-radius:0 3px 3px 0;border-top-width:2px;border-bottom-color:#c6c5b0"></div>
 <div style="left:4px;top:280px;width:50.6px;height:139px;background:#eeeee6"></div>
 <div style="left:4px;top:296px;width:15px;height:138px;background:#e1e1d8"></div>
 <div style="left:19px;top:419px;width:3px;height:15px;background:#eeeee6"></div>
 <div style="left:6.5px;top:282.5px;width:10.5px;height:10.5px;border:1px solid #b9b294;border-radius:2px;background:#f6f5ef"></div>
 <svg style="left:6.5px;top:282.5px" width="11" height="11"><path d="M2.4 2.4 L8.4 8.4 M8.4 2.4 L2.4 8.4" stroke="#000" stroke-width="1.7"/></svg>
 <div style="left:5px;top:389px;width:60px;height:15px;line-height:15px;transform-origin:0 0;transform:rotate(-90deg);font-family:'DejaVu Sans','Liberation Sans',sans-serif;font-size:9.2px;letter-spacing:0;white-space:pre">Оболочка</div>
 <div class="ln" style="left:44.8px;top:280.30px">1</div>
 <div class="ln" style="left:55.3px;top:280.30px">Python<span class="wst">·</span><span class="num">2.4.5</span><span class="wst">·</span><b>(</b><span class="red"><b>Нет</b></span><span class="num">.1</span><b>,</b><span class="ws">·</span>Aug<span class="wst">·</span><span class="num">16</span><span class="wst">·</span><span class="num">2<span class="z">0</span><span class="z">0</span>8</span><b>,</b><span class="wst">·</span><span class="num">21</span><b>:</b><span class="num">34</span><b>:</b><span class="num">2<span class="z">0</span></span><b>)</b><span class="ws">·</span></div>
 <div class="ln" style="left:44.8px;top:293.77px">2</div>
 <div class="ln" style="left:55.3px;top:293.77px"><b>[</b>GCC<span class="wst">·</span><span class="num">4.1.1</span><span class="wst">·</span><span class="num">2<span class="z">0</span><span class="z">0</span>7<span class="z">0</span>1<span class="z">0</span>5</span><span class="wst">·</span><b>(</b>ALT<span class="ws">·</span>Linux<b>,</b><span class="ws">·</span>build<span class="wst">·</span><span class="num">4.1.1</span>-alt11<b>)]</b><span class="wsr">·</span><span class="red">в</span><span class="wsr">·</span>localhost.localdomain<b>,</b><span class="ws">·</span>Qt</div>
 <div class="ln" style="left:55.3px;top:307.24px">-Version</div>
 <div class="ln" style="left:44.8px;top:320.71px">3</div>
 <div class="ln" style="left:55.3px;top:320.71px"><b>&gt;&gt;&gt;</b><span class="wsr">·</span></div>
 <div class="vtrack" style="left:600px;top:281px;width:16px;height:138px"></div>
 <div class="sbtn" style="left:601px;top:281px;width:14px;height:14px"></div>
 <div class="sbtn" style="left:601px;top:391px;width:14px;height:14px"></div>
 <div class="sbtn" style="left:601px;top:405px;width:14px;height:14px"></div>
 <svg style="left:601px;top:281px" width="14" height="14"><polygon points="3.5,9 10.5,9 7,5" fill="#c3c3bd"/></svg>
 <svg style="left:601px;top:391px" width="14" height="14"><polygon points="3.5,9 10.5,9 7,5" fill="#c3c3bd"/></svg>
 <svg style="left:601px;top:405px" width="14" height="14"><polygon points="3.5,5.5 10.5,5.5 7,9.5" fill="#c3c3bd"/></svg>
 <div style="left:605px;top:340px;width:6px;height:1px;background:#b4b4a4"></div>
 <div style="left:605px;top:343px;width:6px;height:1px;background:#b4b4a4"></div>
 <div style="left:605px;top:346px;width:6px;height:1px;background:#b4b4a4"></div>
 <div style="left:600px;top:419px;width:16px;height:15px;background:#efeee6"></div>
 <div class="htrack" style="left:21.5px;top:419px;width:579px;height:14.5px"></div>
 <div class="sbtn" style="left:21.5px;top:419px;width:13.5px;height:14.5px"></div>
 <div class="sbtn" style="left:571.8px;top:419px;width:15.2px;height:14.5px"></div>
 <div class="sbtn" style="left:586.5px;top:419px;width:14px;height:14.5px"></div>
 <svg style="left:21.5px;top:419px" width="14" height="15"><polygon points="4,7.2 8.5,3.5 8.5,11" fill="#000"/></svg>
 <svg style="left:572.5px;top:419px" width="14" height="15"><polygon points="4.5,7.2 9,3.5 9,11" fill="#000"/></svg>
 <svg style="left:586.5px;top:419px" width="14" height="15"><polygon points="10,7.2 5.5,3.5 5.5,11" fill="#000"/></svg>
 <div class="hslider" style="left:34.5px;top:419px;width:49px;height:14.5px"></div>
 <div style="left:55.7px;top:424px;width:1.2px;height:5px;background:#6880b6"></div>
 <div style="left:58.9px;top:424px;width:1.2px;height:5px;background:#6880b6"></div>
 <div style="left:62.1px;top:424px;width:1.2px;height:5px;background:#6880b6"></div>
 <div class="t" style="left:10.4px;top:435.5px">rw Файл: /home/ikh/s2.py</div>
 <div class="t" style="left:412px;top:435.5px">Строка:</div>
 <div class="t" style="left:494px;top:435.5px">1</div>
 <div class="t" style="left:504.5px;top:435.5px">Позиция:</div>
 <div class="t" style="left:592.5px;top:435.5px"><span class="z">0</span></div>
 <svg style="left:603px;top:439px" width="14" height="14"><path d="M2.6 14 L14 2.6 M7 14 L14 7 M11.2 14 L14 11.2" stroke="#ffffff" stroke-width="1.4"/><path d="M1.5 14 L14 1.5 M5.9 14 L14 5.9 M10.1 14 L14 10.1" stroke="#b3ab86" stroke-width="1.5"/></svg>
</div>
</body>
</html>
